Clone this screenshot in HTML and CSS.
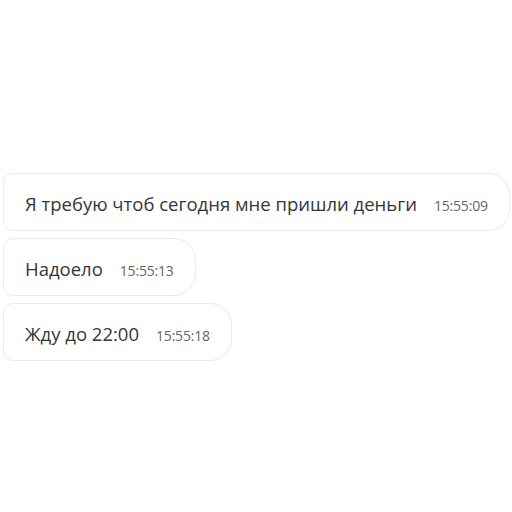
FILE: index.html
```html
<!DOCTYPE html>
<html lang="ru">
<head>
    <meta charset="UTF-8">
    <meta name="viewport" content="width=device-width, initial-scale=1.0">
    <title>Сообщения</title>
    <link rel="stylesheet" href="styles.css">
</head>
<body>
    <div class="chat">
        <div class="message">
            <span class="text">Я требую чтоб сегодня мне пришли деньги</span>
            <span class="time">15:55:09</span>
        </div>
        <div class="message">
            <span class="text">Надоело</span>
            <span class="time">15:55:13</span>
        </div>
        <div class="message">
            <span class="text">Жду до 22:00</span>
            <span class="time">15:55:18</span>
        </div>
    </div>
</body>
</html>
```

FILE: styles.css
```css
body {
    margin: 0;
    height: 512px;
    background-color: #ffffff;
    font-family: 'Open Sans', 'Noto Sans', sans-serif;
    color: #363636;
}
.chat {
    display: flex;
    flex-direction: column;
    align-items: flex-start;
    gap: 7px;
    padding: 173px 0 0 3px;
}
.message {
    display: flex;
    align-items: baseline;
    gap: 17px;
    height: 58px;
    box-sizing: border-box;
    padding: 17px 21px 0 21px;
    border: 1.5px solid #e9e9e9;
    border-radius: 10px 22px 22px 10px;
    background-color: #ffffff;
}
.text {
    font-size: 18.5px;
}
.time {
    font-size: 14px;
    color: #666666;
    letter-spacing: -0.2px;
}
```
